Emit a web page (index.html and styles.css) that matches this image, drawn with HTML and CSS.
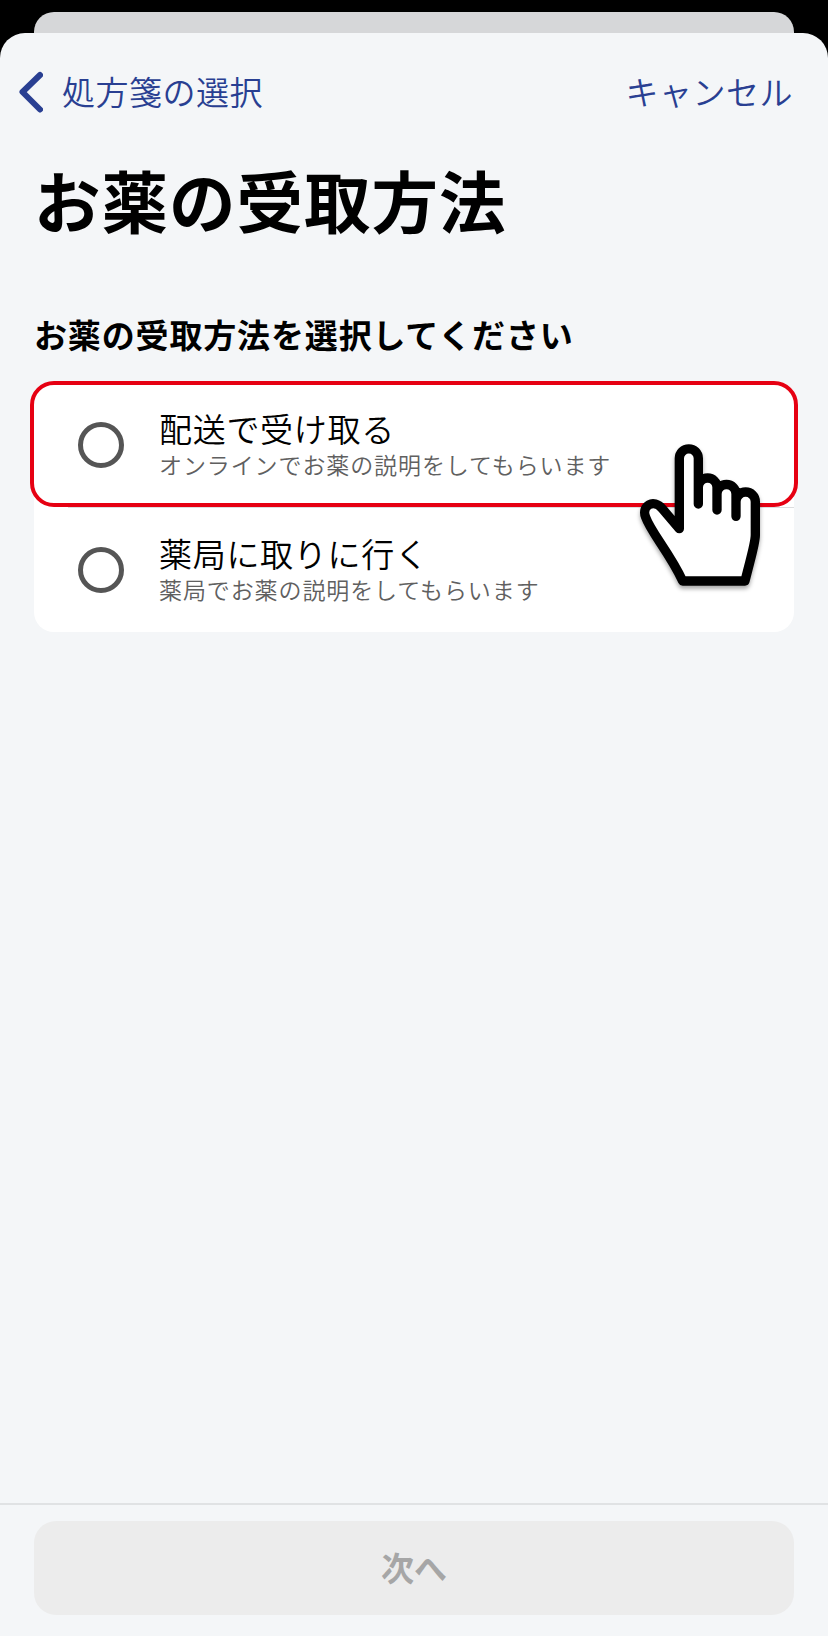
FILE: index.html
```html
<!DOCTYPE html>
<html lang="ja">
  <head>
    <meta charset="utf-8" />
    <title>お薬の受取方法</title>
    <link rel="stylesheet" href="styles.css">
  </head>

  <body>
    <div class="back-sheet"></div>

    <div class="sheet">
      <header class="nav">
        <a class="nav-link back">
          <svg class="chevron" viewBox="0 0 24 42" aria-hidden="true">
            <path d="M21 4 3.5 21l17.5 17.5" />
          </svg>
          <span>処方箋の選択</span>
        </a>
        <a class="nav-link">キャンセル</a>
      </header>

      <main>
        <h1>お薬の受取方法</h1>
        <h2>お薬の受取方法を選択してください</h2>

        <div class="options">
          <label class="option">
            <span class="radio"></span>
            <span class="option-text">
              <span class="option-title">配送で受け取る</span>
              <span class="option-note">オンラインでお薬の説明をしてもらいます</span>
            </span>
          </label>
          <label class="option">
            <span class="radio"></span>
            <span class="option-text">
              <span class="option-title">薬局に取りに行く</span>
              <span class="option-note">薬局でお薬の説明をしてもらいます</span>
            </span>
          </label>
          <div class="highlight"></div>
          <svg class="pointer" viewBox="0 0 660 660" aria-hidden="true">
            <path d="M248 483H435C453 410 466 370 466 345V245a29 29 0 0 0-58 0V289 222a28.5 28.5 0 0 0-57 0V270 202a28 28 0 0 0-56 0V252 115a28.5 28.5 0 0 0-57 0V326L187 266C161 235 123 257 137 292C153 338 208 397 248 483Z" />
          </svg>
        </div>
      </main>

      <footer class="footer">
        <button class="next" disabled>次へ</button>
      </footer>
    </div>
  </body>
</html>
```

FILE: styles.css
```css
* {
  box-sizing: border-box;
}

body {
  margin: 0;
  padding-top: 12px;
  height: 1636px;
  display: flex;
  flex-direction: column;
  background: #000;
  color: #000;
  font-family: "Noto Sans CJK JP", sans-serif;
}

.back-sheet {
  height: 21px;
  margin: 0 34px;
  border-radius: 20px 20px 0 0;
  background: #d6d7d9;
}

.sheet {
  flex: 1;
  display: flex;
  flex-direction: column;
  border-radius: 25px 25px 0 0;
  background: #f4f6f8;
}

.nav {
  display: flex;
  justify-content: space-between;
  align-items: center;
  height: 118px;
  padding: 0 35px 0 19px;
}

.nav-link {
  display: flex;
  align-items: center;
  height: 48px;
  margin-top: -2px;
  color: #293f92;
  font-size: 33px;
  font-weight: 350;
  letter-spacing: 0.5px;
}

.chevron {
  width: 24px;
  height: 42px;
  margin-top: 2px;
  margin-right: 19px;
  fill: none;
  stroke: #293f92;
  stroke-width: 6;
  stroke-linecap: round;
  stroke-linejoin: round;
}

main {
  flex: 1;
  padding: 0 34px;
}

h1 {
  margin: 0;
  font-size: 66.5px;
  font-weight: 700;
  line-height: 96px;
  letter-spacing: 1px;
}

h2 {
  margin: 63px 0 24px;
  font-size: 33px;
  font-weight: 700;
  line-height: 48px;
  letter-spacing: 0.85px;
}

.options {
  position: relative;
  border-radius: 20px;
  background: #fff;
}

.option {
  display: flex;
  align-items: center;
  height: 125px;
  padding-left: 44px;
}

/* divider, inset on the left */
.option + .option {
  background: linear-gradient(#dcdddf, #dcdddf) 34px 0 / 100% 1px no-repeat;
}

.radio {
  width: 46px;
  height: 46px;
  margin-right: 35px;
  border: 5px solid #555;
  border-radius: 50%;
}

.option-text {
  display: flex;
  flex-direction: column;
  margin-top: -1px;
}

.option-title {
  font-size: 33px;
  font-weight: 350;
  line-height: 40px;
  letter-spacing: 0.7px;
}

.option-note {
  color: #606060;
  font-size: 23px;
  font-weight: 350;
  line-height: 32px;
  letter-spacing: 0.9px;
}

/* frame around the first option */
.highlight {
  position: absolute;
  top: -1px;
  left: -4px;
  right: -4px;
  height: 126px;
  border: 4px solid #e60012;
  border-radius: 24px;
}

.pointer {
  position: absolute;
  top: 38px;
  left: 566px;
  width: 220px;
  height: 220px;
  fill: #fff;
  stroke: #000;
  stroke-width: 28;
  stroke-linecap: round;
  stroke-linejoin: round;
  filter: drop-shadow(0 3px 2px rgba(0, 0, 0, 0.35));
}

.footer {
  height: 133px;
  padding: 16px 34px 0;
  border-top: 2px solid #e0e2e4;
}

.next {
  display: block;
  width: 100%;
  height: 94px;
  padding: 0 0 2px;
  border: 0;
  border-radius: 22px;
  background: #ececec;
  color: #a6a6a6;
  font-family: inherit;
  font-size: 33px;
  font-weight: 700;
}
```
